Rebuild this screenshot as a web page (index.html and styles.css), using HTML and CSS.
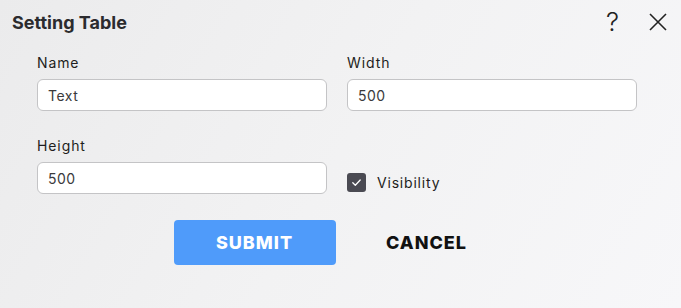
FILE: index.html
```html
<!DOCTYPE html>
<html>
<head>
<meta charset="utf-8">
<link rel="stylesheet" href="styles.css">
</head>
<body>
<div class="dialog">
  <div class="header">
    <h1 class="title">Setting Table</h1>
    <div class="actions">
      <span class="help">?</span>
      <svg class="close" width="18" height="18" viewBox="0 0 18 18"><path d="M1 1L17 17M17 1L1 17" stroke="#222" stroke-width="1.6" fill="none"/></svg>
    </div>
  </div>
  <div class="form">
    <div class="field">
      <label class="label">Name</label>
      <input class="input" type="text" value="Text">
    </div>
    <div class="field">
      <label class="label">Width</label>
      <input class="input" type="text" value="500">
    </div>
    <div class="field">
      <label class="label">Height</label>
      <input class="input" type="text" value="500">
    </div>
    <div class="check-field">
      <span class="checkbox"><svg width="19" height="19" viewBox="0 0 19 19"><path d="M5.8 9.8L8.3 12.2L13.2 7" stroke="#fff" stroke-width="1.3" fill="none" stroke-linecap="round" stroke-linejoin="round"/></svg></span>
      <span class="check-label">Visibility</span>
    </div>
  </div>
  <div class="buttons">
    <button class="btn submit">SUBMIT</button>
    <button class="btn cancel">CANCEL</button>
  </div>
</div>
</body>
</html>
```
FILE: styles.css
```css
html, body {
  margin: 0;
  padding: 0;
}
body {
  width: 681px;
  height: 308px;
  overflow: hidden;
  font-family: Inter, "Noto Sans", sans-serif;
  color: #222;
}
.dialog {
  width: 681px;
  height: 308px;
  box-sizing: border-box;
  background: linear-gradient(120deg, #ebebec 0%, #f2f2f3 50%, #f7f7f9 100%);
}
.header {
  display: flex;
  align-items: center;
  justify-content: space-between;
  padding: 9px 14px 0 12px;
  height: 26px;
}
.title {
  margin: 0;
  font-size: 18px;
  font-weight: 700;
  color: #2b2b2e;
}
.actions {
  display: flex;
  align-items: center;
  gap: 30px;
}
.help {
  font-size: 26px;
  font-weight: 300;
  color: #222;
  line-height: 26px;
}
.close {
  display: block;
}
.form {
  display: grid;
  grid-template-columns: 290px 290px;
  column-gap: 20px;
  row-gap: 26px;
  padding: 19px 0 0 37px;
}
.field {
  display: flex;
  flex-direction: column;
  gap: 8px;
}
.label {
  font-size: 14px;
  line-height: 17px;
  letter-spacing: 0.9px;
  color: #1e1e20;
}
.input {
  box-sizing: border-box;
  width: 290px;
  height: 32px;
  border: 1px solid #c4c4c6;
  border-radius: 6px;
  background: #fff;
  padding: 0 10px;
  font-family: Inter, "Noto Sans", sans-serif;
  font-size: 14px;
  letter-spacing: 0.5px;
  color: #3a3a3c;
  outline: none;
}
.check-field {
  display: flex;
  align-items: center;
  gap: 11px;
  align-self: end;
  padding-bottom: 2px;
}
.checkbox {
  width: 19px;
  height: 19px;
  border-radius: 3px;
  background: #4a4a52;
  display: flex;
}
.check-label {
  font-size: 14px;
  letter-spacing: 0.8px;
  color: #1e1e20;
}
.buttons {
  display: flex;
  justify-content: center;
  gap: 10px;
  margin-top: 26px;
}
.btn {
  width: 162px;
  height: 45px;
  border: none;
  border-radius: 4px;
  font-family: Inter, "Noto Sans", sans-serif;
  font-size: 18px;
  font-weight: 800;
  letter-spacing: 1px;
  cursor: pointer;
}
.submit {
  background: #4f9bfa;
  color: #fff;
}
.cancel {
  background: transparent;
  color: #111;
}
```
